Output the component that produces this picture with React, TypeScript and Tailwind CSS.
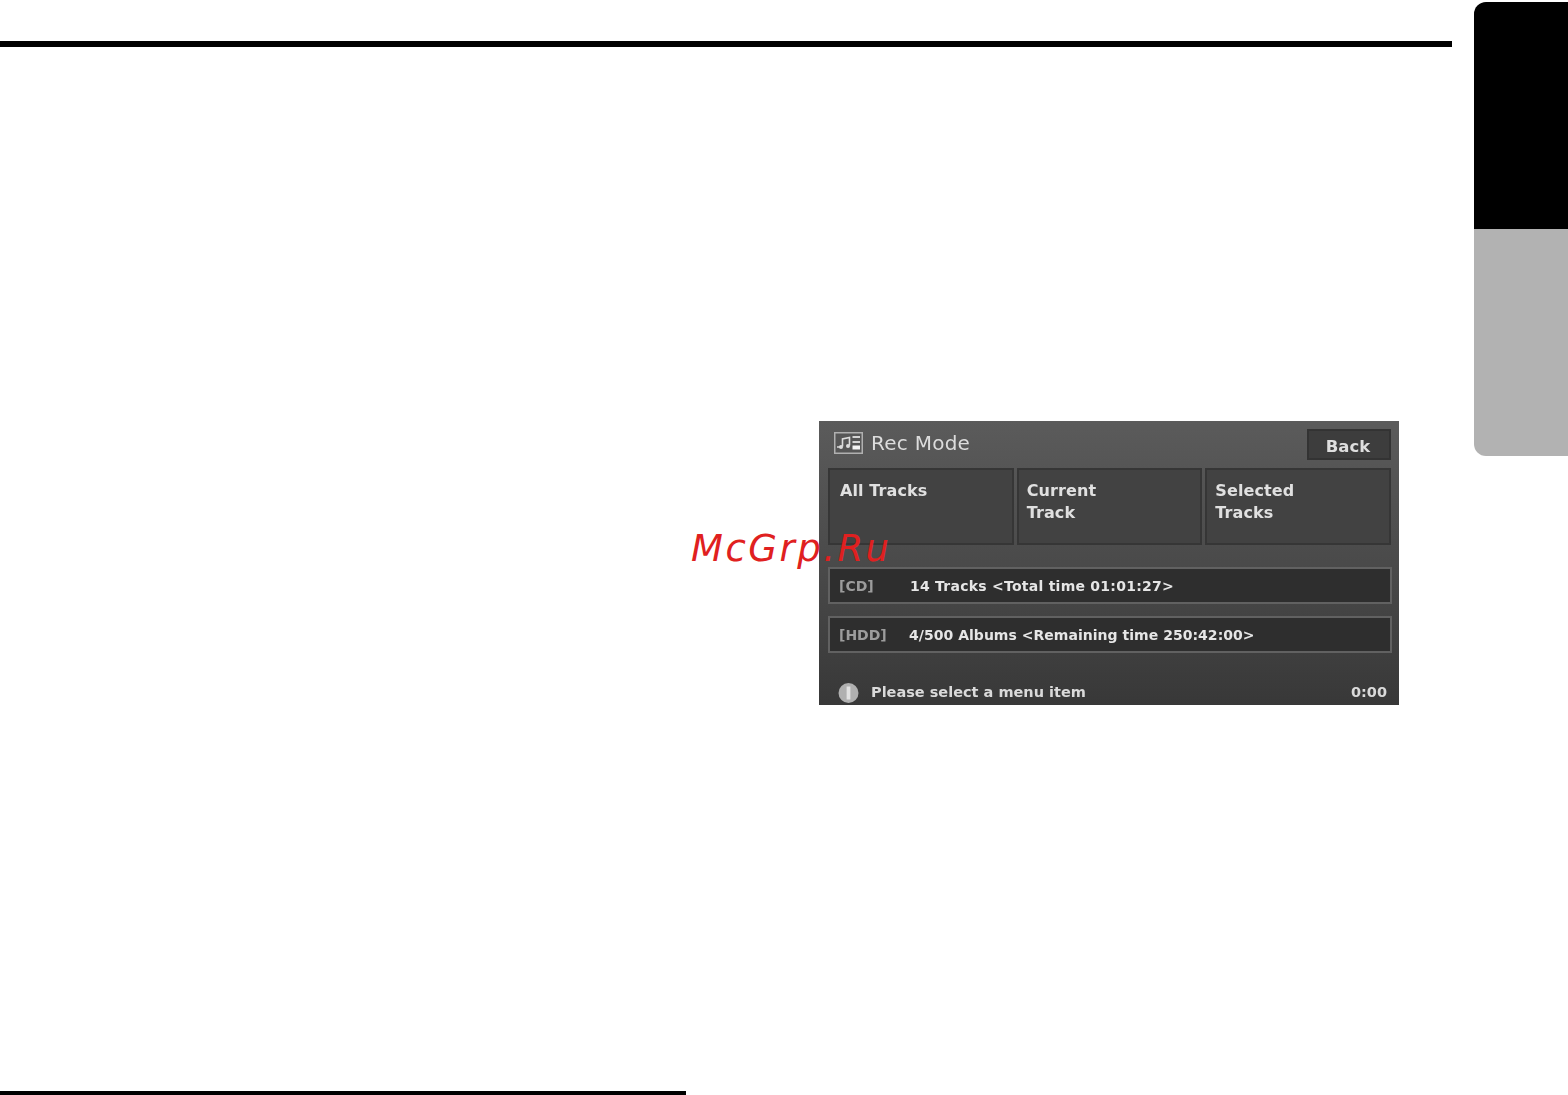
import React from 'react';

const tracks = [
  { tag: '[CD]', text: '14 Tracks <Total time 01:01:27>', indent: 'w-[71px]', spacing: 'tracking-[0.25px]' },
  { tag: '[HDD]', text: '4/500 Albums <Remaining time 250:42:00>', indent: 'w-[70px]', spacing: 'tracking-[0.03px]' }
];

const modes = [
  { lines: ['All Tracks'], inset: 'pl-[10px]' },
  { lines: ['Current', 'Track'], inset: 'pl-[8px]' },
  { lines: ['Selected', 'Tracks'], inset: 'pl-[8px]' }
];

const RecIcon = () => (
  <svg width="29" height="22" viewBox="0 0 29 22" className="shrink-0">
    <rect x="0.75" y="0.75" width="27.5" height="20.5" fill="#565656" stroke="#b0b0b0" strokeWidth="1.5" />
    <path d="M3 15h3M8.5 14.5V7l7-1.5v8" fill="none" stroke="#dcdcdc" strokeWidth="1.6" />
    <circle cx="7" cy="15" r="2" fill="#dcdcdc" />
    <circle cx="14" cy="14" r="2" fill="#dcdcdc" />
    <path d="M18.5 5h7.5M18.5 10h7.5" stroke="#d4d4d4" strokeWidth="2.2" />
    <path d="M18.5 15.5h7.5" stroke="#f4f4f4" strokeWidth="4" />
  </svg>
);

const InfoIcon = () => (
  <svg width="21" height="20" viewBox="0 0 21 20" className="shrink-0">
    <circle cx="10.5" cy="10" r="10" fill="#b0b0b0" />
    <rect x="8.6" y="3.5" width="3.8" height="13" fill="#e2e2e2" />
  </svg>
);

const App = () => {
  return (
    <div className="relative flex w-[1568px] h-[1095px] overflow-hidden bg-white font-['DejaVu_Sans',sans-serif]">
      <div className="flex flex-col w-[1474px] h-full">
        {/* Page rule */}
        <div className="mt-[41px] w-[1452px] h-[6px] bg-black" />

        {/* Screen capture */}
        <div className="ml-[819px] mt-[374px] w-[580px] h-[284px] overflow-hidden flex flex-col px-[9px] bg-gradient-to-b from-[#5b5b5b] via-[#4a4a4a] to-[#383838] text-[#e4e4e4] blur-[0.6px]">
          <div className="flex items-center h-[47px] shrink-0">
            <div className="flex items-center gap-[8px] ml-[6px] -mt-[3px]">
              <RecIcon />
              <span className="text-[20px] tracking-[0.25px] text-[#dcdcdc]">Rec Mode</span>
            </div>
            <div className="ml-auto -mr-[1px] w-[84px] h-[31px] pt-[6px] pr-[2px] flex items-center justify-center bg-[#3d3d3d] border-2 border-[#333333] text-[16.5px] font-bold text-[#dedede]">
              Back
            </div>
          </div>

          <div className="grid grid-cols-3 gap-[3px] h-[77px] shrink-0 w-[563px]">
            {modes.map((mode) => (
              <div key={mode.lines[0]} className={`${mode.inset} bg-[#424242] border-2 border-[#363636] pt-[10px] text-[16px] leading-[22px] font-bold tracking-[0.1px] text-[#e0e0e0]`}>
                {mode.lines.map((line) => (
                  <div key={line}>{line}</div>
                ))}
              </div>
            ))}
          </div>

          <div className="flex flex-col gap-[12px] mt-[22px] w-[564px] shrink-0">
            {tracks.map((row) => (
              <div key={row.tag} className="flex items-center h-[37px] pl-[9px] pt-[1px] bg-[#2e2e2e] border-2 border-[#616161] text-[14px] font-bold">
                <span className={`${row.indent} shrink-0 text-[#9c9c9c]`}>{row.tag}</span>
                <span className={`${row.spacing} text-[#e6e6e6]`}>{row.text}</span>
              </div>
            ))}
          </div>

          <div className="flex items-center mt-[29px] pl-[10px] pr-[3px] text-[14.5px] font-bold text-[#dadada]">
            <InfoIcon />
            <span className="ml-[12px]">Please select a menu item</span>
            <span className="ml-auto">0:00</span>
          </div>
        </div>

        {/* Bottom rule */}
        <div className="mt-auto w-[686px] h-[4px] bg-black" />
      </div>

      {/* Side tabs */}
      <div className="flex flex-col w-[94px] pt-[2px]">
        <div className="h-[227px] bg-black rounded-tl-[12px]" />
        <div className="h-[227px] bg-[#b2b2b2] rounded-bl-[12px]" />
      </div>

      {/* Watermark */}
      <span className="absolute left-[691px] top-[526px] text-[37px] leading-[45px] tracking-[2.5px] italic text-[#e02020]">
        McGrp.Ru
      </span>
    </div>
  );
};

export default App;
